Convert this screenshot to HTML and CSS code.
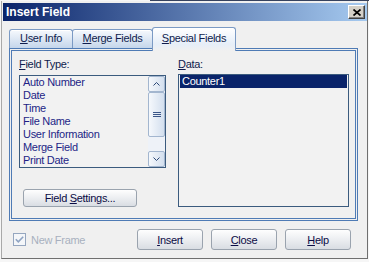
FILE: index.html
```html
<!DOCTYPE html>
<html lang="en">
<head>
    <meta charset="UTF-8">
    <title>Insert Field</title>
    <link rel="stylesheet" href="styles.css">
</head>
<body>
    <div class="window">
        <div class="titlebar">
            <span class="title">Insert Field</span>
            <button class="close-btn" title="Close">
                <svg width="8" height="7" viewBox="0 0 8 7">
                    <path d="M0.5 0.5 L7.5 6.5 M7.5 0.5 L0.5 6.5" stroke="#000" stroke-width="1.7"/>
                </svg>
            </button>
        </div>

        <div class="tabs">
            <div class="tab tab-user"><u>U</u>ser Info</div>
            <div class="tab tab-merge"><u>M</u>erge Fields</div>
            <div class="tab tab-special active"><u>S</u>pecial Fields</div>
        </div>

        <div class="panel">
            <div class="col col-left">
                <label class="label"><u>F</u>ield Type:</label>
                <div class="listbox field-list">
                    <ul class="items">
                        <li>Auto Number</li>
                        <li>Date</li>
                        <li>Time</li>
                        <li>File Name</li>
                        <li>User Information</li>
                        <li>Merge Field</li>
                        <li>Print Date</li>
                    </ul>
                    <div class="scrollbar">
                        <div class="sb-btn">
                            <svg width="7" height="4" viewBox="0 0 7 4"><path d="M0.5 3.5 L3.5 0.5 L6.5 3.5" fill="none" stroke="#2b4776" stroke-width="1"/></svg>
                        </div>
                        <div class="sb-btn sb-thumb">
                            <svg width="8" height="5" viewBox="0 0 8 5"><path d="M0 0.5 H8 M0 2.5 H8 M0 4.5 H8" stroke="#3a5688" stroke-width="1"/></svg>
                        </div>
                        <div class="sb-track"></div>
                        <div class="sb-btn">
                            <svg width="7" height="4" viewBox="0 0 7 4"><path d="M0.5 0.5 L3.5 3.5 L6.5 0.5" fill="none" stroke="#2b4776" stroke-width="1"/></svg>
                        </div>
                    </div>
                </div>
                <button class="btn settings-btn">Field <u>S</u>ettings...</button>
            </div>

            <div class="col col-right">
                <label class="label label-data"><u>D</u>ata:</label>
                <div class="listbox data-list">
                    <div class="selected">Counter1</div>
                </div>
            </div>
        </div>

        <div class="footer">
            <label class="check">
                <span class="box">
                    <svg width="9" height="7" viewBox="0 0 9 7"><path d="M0.8 3.3 L3.3 5.8 L8.2 0.8" fill="none" stroke="#8ea3c2" stroke-width="1.6"/></svg>
                </span>
                New Frame
            </label>
            <div class="buttons">
                <button class="btn"><u>I</u>nsert</button>
                <button class="btn"><u>C</u>lose</button>
                <button class="btn"><u>H</u>elp</button>
            </div>
        </div>
    </div>
</body>
</html>
```

FILE: styles.css
```css
body {
    margin: 0;
    background: linear-gradient(#36425e, #36425e) 150px 0 / 219px 1px no-repeat, #f6f6f6;
    font-family: "Liberation Sans", Arial, sans-serif;
    font-size: 11px;
    letter-spacing: -0.3px;
}
.window {
    width: 367px;
    height: 258px;
    margin: 1px 0 0 1px;
    box-sizing: border-box;
    padding: 2px 0 0 1px;
    background: #f0f0f0;
    border-left: 1px solid #a9a9a9;
    border-right: 1px solid #6f6f6f;
    border-bottom: 1px solid #6f6f6f;
}
.titlebar {
    height: 18px;
    display: flex;
    align-items: center;
    justify-content: space-between;
    padding: 0 2px 0 3px;
    background: linear-gradient(to right, #0a246a, #a6caf0);
}
.title {
    color: #fff;
    font-weight: bold;
    font-size: 12px;
    letter-spacing: 0;
}
.close-btn {
    width: 17px;
    height: 14px;
    box-sizing: border-box;
    padding: 0;
    display: flex;
    align-items: center;
    justify-content: center;
    background: #d4d0c8;
    border: 1px solid;
    border-color: #fff #404040 #404040 #fff;
    box-shadow: inset -1px -1px #808080;
}

/* tabs */
.tabs {
    display: flex;
    align-items: flex-end;
    height: 21px;
    margin: 6px 0 0 6px;
}
.tab {
    box-sizing: border-box;
    height: 19px;
    margin-right: -1px;
    border: 1px solid #7b9ac4;
    border-bottom: none;
    border-radius: 3px 3px 0 0;
    background: linear-gradient(#f6f9fd, #c5d6eb);
    box-shadow: inset 0 1px #fff;
    color: #0f1c4d;
    text-align: center;
    line-height: 17px;
}
.tab-user { width: 64px; }
.tab-merge { width: 81px; }
.tab-special { width: 84px; }
.tab.active {
    position: relative;
    z-index: 1;
    height: 24px;
    margin-bottom: -3px;
    padding-top: 2px;
    background: linear-gradient(#ffffff, #e6eef8 70%, #f0f0f0);
}

/* panel */
.panel {
    box-sizing: border-box;
    width: 349px;
    height: 173px;
    margin-left: 6px;
    padding: 7px 0 0 7px;
    display: flex;
    border: 3px double #4f7bb5;
}
.col-left {
    width: 147px;
}
.col-right {
    width: 171px;
    margin-left: 12px;
}
.label {
    display: block;
    height: 13px;
    line-height: 13px;
    margin-bottom: 4px;
    color: #0f1c4d;
}
.label-data {
    margin-bottom: 3px;
}
.listbox {
    box-sizing: border-box;
    border: 1px solid #3b5b7e;
    background: #f2f2f2;
}
.field-list {
    height: 93px;
    display: flex;
}
.items {
    flex: 1;
    margin: 0;
    padding: 0 0 0 3px;
    list-style: none;
    color: #231f86;
    line-height: 13px;
    overflow: hidden;
}
.scrollbar {
    width: 17px;
    display: flex;
    flex-direction: column;
    background: #eef2f8;
}
.sb-btn {
    height: 16px;
    box-sizing: border-box;
    border: 1px solid #a3b6cf;
    border-radius: 2px;
    background: linear-gradient(to right, #f5f8fc, #d3dfee);
    display: flex;
    align-items: center;
    justify-content: center;
}
.sb-thumb {
    height: 45px;
}
.sb-track {
    flex: 1;
}
.data-list {
    height: 133px;
    padding: 0 1px;
}
.selected {
    background: #0a246a;
    color: #fff;
    line-height: 13px;
    padding-left: 2px;
}

/* buttons */
.btn {
    box-sizing: border-box;
    padding: 0;
    border: 1px solid #9aa3ae;
    border-radius: 3px;
    background: linear-gradient(#fefefe, #eceef1 50%, #d9dde3);
    font: inherit;
    letter-spacing: inherit;
    color: #0b0b45;
}
.settings-btn {
    display: block;
    width: 114px;
    height: 18px;
    margin: 21px 0 0 4px;
}
.footer {
    display: flex;
    align-items: center;
    height: 21px;
    margin-top: 8px;
    padding: 0 16px 0 10px;
}
.check {
    display: flex;
    align-items: center;
    color: #a8b0bf;
}
.box {
    width: 13px;
    height: 13px;
    box-sizing: border-box;
    margin-right: 5px;
    border: 1px solid #95a6bf;
    background: #f4f6f9;
    display: flex;
    align-items: center;
    justify-content: center;
}
.buttons {
    margin-left: auto;
    display: flex;
    gap: 8px;
}
.buttons .btn {
    width: 66px;
    height: 21px;
}
```
